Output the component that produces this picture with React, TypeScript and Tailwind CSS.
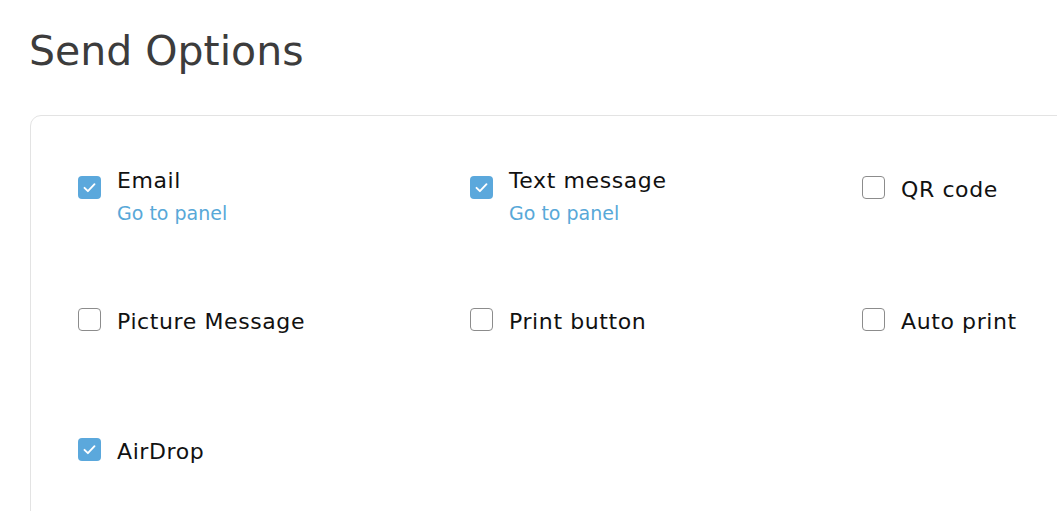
import React from 'react'

type Option = {
  label: string
  checked: boolean
  link?: boolean
}

const rows: Option[][] = [
  [
    { label: 'Email', checked: true, link: true },
    { label: 'Text message', checked: true, link: true },
    { label: 'QR code', checked: false },
  ],
  [
    { label: 'Picture Message', checked: false },
    { label: 'Print button', checked: false },
    { label: 'Auto print', checked: false },
  ],
  [{ label: 'AirDrop', checked: true }],
]

const Box: React.FC<{ checked: boolean }> = ({ checked }) =>
  checked ? (
    <span className="flex h-[23px] w-[23px] shrink-0 items-center justify-center rounded-[4px] bg-[#5ba8dc]">
      <svg width="23" height="23" viewBox="0 0 23 23" fill="none">
        <path d="M6.5 11.8l3.4 3.4 6.6-7" stroke="#fff" strokeWidth="1.9" strokeLinecap="round" strokeLinejoin="round" />
      </svg>
    </span>
  ) : (
    <span className="block h-[23px] w-[23px] shrink-0 rounded-[4px] border-[1.5px] border-[#8c8c8c] bg-white" />
  )

const OptionItem: React.FC<{ option: Option }> = ({ option }) => (
  <div className={`flex w-[392px] shrink-0 items-start gap-[16px] ${option.link ? '' : 'pt-[7px]'}`}>
    <div className={option.link ? 'pt-[7px]' : ''}>
      <Box checked={option.checked} />
    </div>
    <div className={`flex flex-col ${option.link ? '' : 'pt-[2px]'}`}>
      <span className="text-[22px] leading-[23px] tracking-[0.6px] text-[#111]">{option.label}</span>
      {option.link && (
        <a href="#" className="mt-[10px] text-[19px] leading-[22px] text-[#58a8d8]">
          Go to panel
        </a>
      )}
    </div>
  </div>
)

export default function App() {
  return (
    <div className="h-[511px] w-[1057px] overflow-hidden bg-white pl-[29px] pt-[27px]" style={{ fontFamily: '"DejaVu Sans", sans-serif' }}>
      <h1 className="text-[41px] leading-[48px] text-[#3c3c3c]">Send Options</h1>
      <div className="mt-[40px] ml-px h-[500px] w-[1100px] rounded-tl-[11px] border border-[#e3e3e3] pl-[47px] pt-[53px]">
        <div className="flex h-[132px]">
          {rows[0].map((opt) => (
            <OptionItem key={opt.label} option={opt} />
          ))}
        </div>
        <div className="flex h-[130px]">
          {rows[1].map((opt) => (
            <OptionItem key={opt.label} option={opt} />
          ))}
        </div>
        <div className="flex">
          {rows[2].map((opt) => (
            <OptionItem key={opt.label} option={opt} />
          ))}
        </div>
      </div>
    </div>
  )
}
